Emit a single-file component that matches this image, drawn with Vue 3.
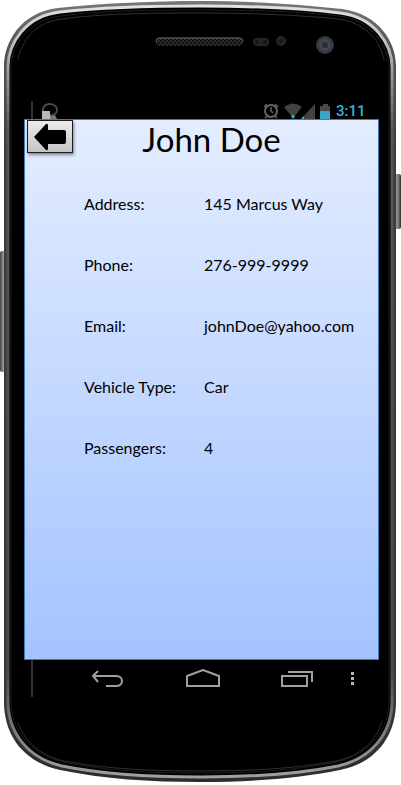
<script setup>
const details = [
  { label: 'Address:', value: '145 Marcus Way' },
  { label: 'Phone:', value: '276-999-9999' },
  { label: 'Email:', value: 'johnDoe@yahoo.com' },
  { label: 'Vehicle Type:', value: 'Car' },
  { label: 'Passengers:', value: '4' }
]
</script>

<template>
  <div class="phone">
    <svg class="shell" viewBox="0 0 401 785" preserveAspectRatio="none" aria-hidden="true">
      <defs>
        <linearGradient id="rim" x1="0" y1="0" x2="0" y2="1">
          <stop offset="0" stop-color="#777" />
          <stop offset="0.06" stop-color="#555" />
          <stop offset="0.2" stop-color="#3c3c3c" />
          <stop offset="0.9" stop-color="#383838" />
          <stop offset="1" stop-color="#2c2c2c" />
        </linearGradient>
        <linearGradient id="shine" x1="0" y1="0" x2="0" y2="1">
          <stop offset="0" stop-color="#e2e2e2" />
          <stop offset="0.06" stop-color="#b4b4b4" />
          <stop offset="0.16" stop-color="#555" />
          <stop offset="0.86" stop-color="#4a4a4a" />
          <stop offset="1" stop-color="#a0a0a0" />
        </linearGradient>
        <linearGradient id="key" x1="0" y1="0" x2="1" y2="0">
          <stop offset="0" stop-color="#444" />
          <stop offset="0.5" stop-color="#999" />
          <stop offset="1" stop-color="#333" />
        </linearGradient>
        <pattern id="mesh" width="4" height="4" patternUnits="userSpaceOnUse">
          <rect width="4" height="4" fill="#2c2c2c" />
          <circle cx="1" cy="1" r="1" fill="#090909" />
          <circle cx="3" cy="3" r="1" fill="#090909" />
        </pattern>
      </defs>
      <rect x="0" y="251" width="7" height="121" rx="2" fill="url(#key)" />
      <rect x="393" y="174" width="8" height="55" rx="2" fill="url(#key)" />
      <path d="M4 66C4 42 21 12 58 8C105 3 155 1 200 1C250 1 300 4 342 9C379 14 396 42 396 66V702C396 736 376 763 340 770C296 779 248 782 200 782C150 782 104 779 60 770C24 762 4 736 4 702Z" fill="url(#rim)" />
      <path d="M8 67C8 44 25 16 60 12C106 7 156 6 200 6C250 6 299 8 340 13C374 17 392 44 392 67V701C392 732 373 758 338 766C294 775 248 777 200 777C150 777 106 775 62 766C27 758 8 732 8 701Z" fill="#000" stroke="url(#shine)" stroke-width="3" />
      <path d="M11 68C11 46 28 20 61 16C107 10 156 10 200 10C250 10 299 11 339 16C371 20 389 46 389 68V700C389 730 371 754 337 762C293 771 248 773 200 773C150 773 107 771 63 762C29 754 11 730 11 700Z" fill="#000" stroke="#1c1c1c" stroke-width="1" />
      <path d="M18 59C24 35 39 22 61 19C107 13 156 13 200 13C250 13 299 15 339 19C362 23 379 36 384 60M18 723C26 744 42 756 64 761C107 769 150 771 200 771C248 771 293 769 336 761C360 756 376 742 382 721" fill="none" stroke="#303030" stroke-width="1" />
      <rect x="156" y="37" width="87" height="9" rx="4" fill="url(#mesh)" />
      <path d="M156 42Q156 38 160 38H239Q243 38 243 42" fill="none" stroke="#606060" />
      <rect x="253" y="38" width="16" height="8" rx="4" fill="#252323" />
      <circle cx="257" cy="42" r="2" fill="#171313" />
      <circle cx="265" cy="42" r="2" fill="#171313" />
      <circle cx="281" cy="41" r="5" fill="#252525" />
      <circle cx="281" cy="41" r="2" fill="#151515" />
      <circle cx="325" cy="45" r="9" fill="#343a44" />
      <circle cx="325" cy="45" r="6" fill="#41464f" />
      <circle cx="325" cy="45" r="3" fill="#292d34" />
      <path d="M32 101V697" stroke="#303030" stroke-width="2" />
    </svg>

    <div class="status">
      <svg class="notice" width="20" height="18" viewBox="0 0 20 18" aria-hidden="true">
        <path d="M4 12C1 7 5 3 10 3C15 3 18 7 17 10C16 13 14 14 12 14" fill="none" stroke="#494949" stroke-width="2" />
        <path d="M10 18V13L13 15L15 14L17 18Z" fill="#777" />
        <rect x="2" y="10" width="8" height="8" fill="#b8b8b8" />
      </svg>
      <svg width="69" height="18" viewBox="0 0 69 18" aria-hidden="true">
        <g fill="none" stroke="#646464">
          <circle cx="8" cy="10" r="6" stroke-width="2" />
          <path d="M1 6L4 3M12 3L15 6M8 6V10L10 12M4 15L2 17M12 15L14 17" stroke-width="1.500" />
        </g>
        <path d="M21 6Q30 -1 39 6L30 17Z" fill="#424242" />
        <path d="M28 15Q30 13 32 15L30 18Z" fill="#33b5e5" />
        <path d="M52 3V18H38Z" fill="#424242" />
        <path d="M41 15V18H38Z" fill="#33b5e5" />
        <path d="M57 5H60V3H65V5H67V10H57Z" fill="#484848" />
        <rect x="57" y="10" width="10" height="8" fill="#38a6cc" />
      </svg>
      <time class="clock">3:11</time>
    </div>

    <main class="screen">
      <header class="heading">
        <button class="back" type="button" aria-label="Back">
          <svg width="34" height="28" viewBox="0 0 34 28" aria-hidden="true">
            <path d="M1 14L13 1Q15 0 15 3V7H31Q33 7 33 9V19Q33 21 31 21H15V25Q15 28 13 27Z" fill="#000" />
          </svg>
        </button>
        <h1>John Doe</h1>
      </header>
      <dl class="details">
        <div v-for="item in details" :key="item.label" class="detail">
          <dt>{{ item.label }}</dt>
          <dd>{{ item.value }}</dd>
        </div>
      </dl>
    </main>

    <nav class="navigation" aria-label="System">
      <button type="button" aria-label="Previous">
        <svg width="34" height="20" viewBox="0 0 34 20">
          <path d="M6 2L1 7L6 13M1 7H24C32 7 32 17 24 17H14" fill="none" stroke="#a0a0a0" stroke-width="2" />
        </svg>
      </button>
      <button type="button" aria-label="Home">
        <svg width="36" height="20" viewBox="0 0 36 20">
          <path d="M1 17V7L17 1L33 7V17Z" fill="none" stroke="#a0a0a0" stroke-width="2" />
        </svg>
      </button>
      <button type="button" aria-label="Recent apps">
        <svg width="34" height="20" viewBox="0 0 34 20">
          <path d="M2 7H27V17H2ZM8 3H32V13" fill="none" stroke="#a0a0a0" stroke-width="2" />
        </svg>
      </button>
      <button type="button" aria-label="More">
        <svg width="6" height="20" viewBox="0 0 6 20">
          <path d="M1 3H4V6H1ZM1 8H4V11H1ZM1 13H4V16H1Z" fill="#b8b8b8" />
        </svg>
      </button>
    </nav>
  </div>
</template>

<style>
body {
  margin: 0;
  background: #fff;
}
</style>

<style scoped>
.phone {
  position: relative;
  display: flex;
  flex-direction: column;
  box-sizing: border-box;
  min-height: 100vh;
  padding: 101px 22px 96px 24px;
  font-family: Lato, "Liberation Sans", sans-serif;
  color: #000;
}
.shell {
  position: absolute;
  inset: 0;
  width: 100%;
  height: 100%;
}
.status,
.screen,
.navigation {
  position: relative;
}
.status {
  display: flex;
  align-items: flex-end;
  height: 18px;
  padding: 0 11px 0 16px;
}
.notice {
  margin-right: auto;
}
.clock {
  width: 32px;
  margin-left: 4px;
  color: #38b0db;
  font: 500 15px/16px Roboto, sans-serif;
}
.screen {
  flex: 1;
  box-sizing: border-box;
  border: 1px solid #417ab9;
  background: linear-gradient(#e4edff, #a4c3ff);
}
.heading {
  display: grid;
  grid-template-columns: 48px 1fr 28px;
  align-items: start;
  height: 53px;
}
button {
  padding: 0;
  border: 0;
  background: transparent;
}
button svg {
  display: block;
}
.back {
  display: grid;
  place-items: center;
  width: 46px;
  height: 33px;
  margin-left: 2px;
  border: 1px solid #1b1b1b;
  background: linear-gradient(#ececec, #c4c4c4);
  box-shadow: 1px 2px 3px #7c8495;
}
h1 {
  margin: 0;
  font-size: 33px;
  font-weight: 400;
  line-height: 38px;
  text-align: center;
}
.details {
  margin: 0;
  padding-left: 59px;
}
.detail {
  display: grid;
  grid-template-columns: 120px 1fr;
  align-items: center;
  height: 61px;
  font-size: 16px;
  line-height: 20px;
}
dt,
dd {
  margin: 0;
  white-space: nowrap;
}
.navigation {
  display: grid;
  grid-template-columns: 4fr 4fr 3fr auto;
  justify-items: start;
  align-items: center;
  height: 20px;
  margin-top: 9px;
  padding: 0 23px 0 68px;
}
</style>
